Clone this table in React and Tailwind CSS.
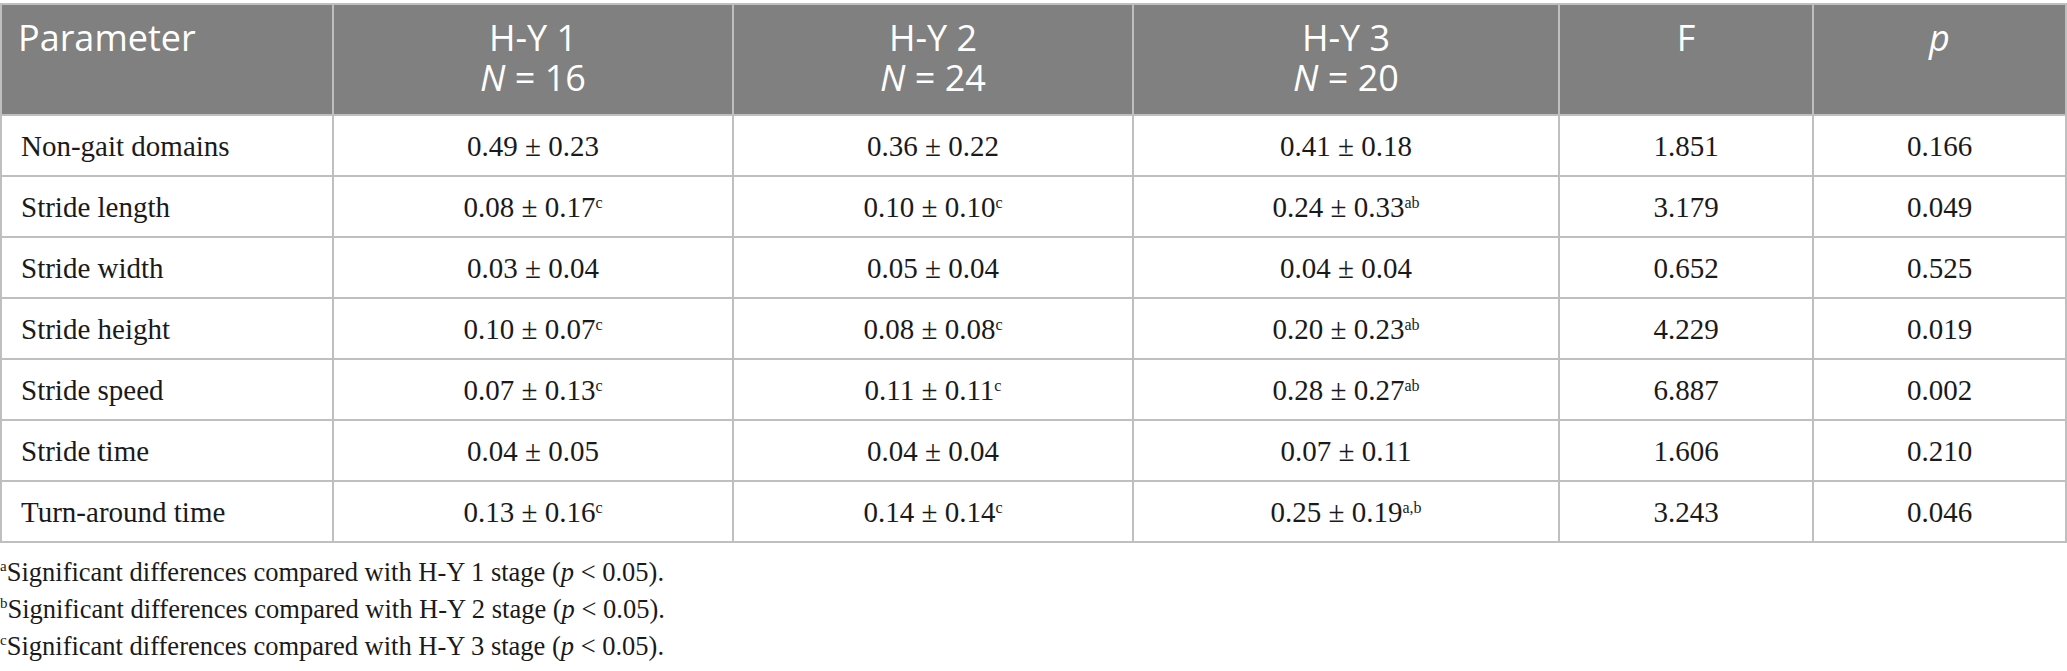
import React from "react";

const rows = [
  ["Non-gait domains", ["0.49 ± 0.23", ""], ["0.36 ± 0.22", ""], ["0.41 ± 0.18", ""], "1.851", "0.166"],
  ["Stride length", ["0.08 ± 0.17", "c"], ["0.10 ± 0.10", "c"], ["0.24 ± 0.33", "ab"], "3.179", "0.049"],
  ["Stride width", ["0.03 ± 0.04", ""], ["0.05 ± 0.04", ""], ["0.04 ± 0.04", ""], "0.652", "0.525"],
  ["Stride height", ["0.10 ± 0.07", "c"], ["0.08 ± 0.08", "c"], ["0.20 ± 0.23", "ab"], "4.229", "0.019"],
  ["Stride speed", ["0.07 ± 0.13", "c"], ["0.11 ± 0.11", "c"], ["0.28 ± 0.27", "ab"], "6.887", "0.002"],
  ["Stride time", ["0.04 ± 0.05", ""], ["0.04 ± 0.04", ""], ["0.07 ± 0.11", ""], "1.606", "0.210"],
  ["Turn-around time", ["0.13 ± 0.16", "c"], ["0.14 ± 0.14", "c"], ["0.25 ± 0.19", "a,b"], "3.243", "0.046"],
];

const serif = { fontFamily: '"Liberation Serif", "Times New Roman", serif' };

function Val({ v }) {
  return (
    <span>
      {v[0]}
      {v[1] ? <sup className="text-[16px] top-[-0.6em]">{v[1]}</sup> : null}
    </span>
  );
}

export default function App() {
  const grid = "grid grid-cols-[332px_400px_400px_426px_254px_253px]";
  const hcell = "border-r-2 border-b-2 border-[#bfbfbf] bg-[#7f807f] text-white h-[111px] pt-[13px] leading-[40px] text-[36px]";
  const bcell = "border-r-2 border-b-2 border-[#bfbfbf] h-[61px] flex items-center pt-[3px] text-[29px] text-[#1a1a1a]";
  return (
    <div className="w-[2067px] h-[671px] bg-white overflow-hidden">
      <div className="mt-[3px] w-[2067px] border-l-2 border-t-2 border-[#bfbfbf]">
        <div className={grid} style={{ fontFamily: '"Open Sans", Lato, sans-serif' }}>
          <div className={hcell + " pl-[16px]"}>Parameter</div>
          <div className={hcell + " text-center"}>
            <div>H-Y 1</div>
            <div><i>N</i> = 16</div>
          </div>
          <div className={hcell + " text-center"}>
            <div>H-Y 2</div>
            <div><i>N</i> = 24</div>
          </div>
          <div className={hcell + " text-center"}>
            <div>H-Y 3</div>
            <div><i>N</i> = 20</div>
          </div>
          <div className={hcell + " text-center"}>F</div>
          <div className={hcell + " text-center"}><i>p</i></div>
        </div>
        {rows.map((r, i) => (
          <div key={i} className={grid} style={serif}>
            <div className={bcell + " pl-[19px]"}>{r[0]}</div>
            <div className={bcell + " justify-center"}><Val v={r[1]} /></div>
            <div className={bcell + " justify-center"}><Val v={r[2]} /></div>
            <div className={bcell + " justify-center"}><Val v={r[3]} /></div>
            <div className={bcell + " justify-center"}>{r[4]}</div>
            <div className={bcell + " justify-center"}>{r[5]}</div>
          </div>
        ))}
      </div>
      <div className="mt-[11px] text-[26.5px] leading-[37px] text-[#1a1a1a]" style={serif}>
        <div><sup className="text-[15px] top-[-0.7em]">a</sup>Significant differences compared with H-Y 1 stage (<i>p</i> &lt; 0.05).</div>
        <div><sup className="text-[15px] top-[-0.7em]">b</sup>Significant differences compared with H-Y 2 stage (<i>p</i> &lt; 0.05).</div>
        <div><sup className="text-[15px] top-[-0.7em]">c</sup>Significant differences compared with H-Y 3 stage (<i>p</i> &lt; 0.05).</div>
      </div>
    </div>
  );
}
